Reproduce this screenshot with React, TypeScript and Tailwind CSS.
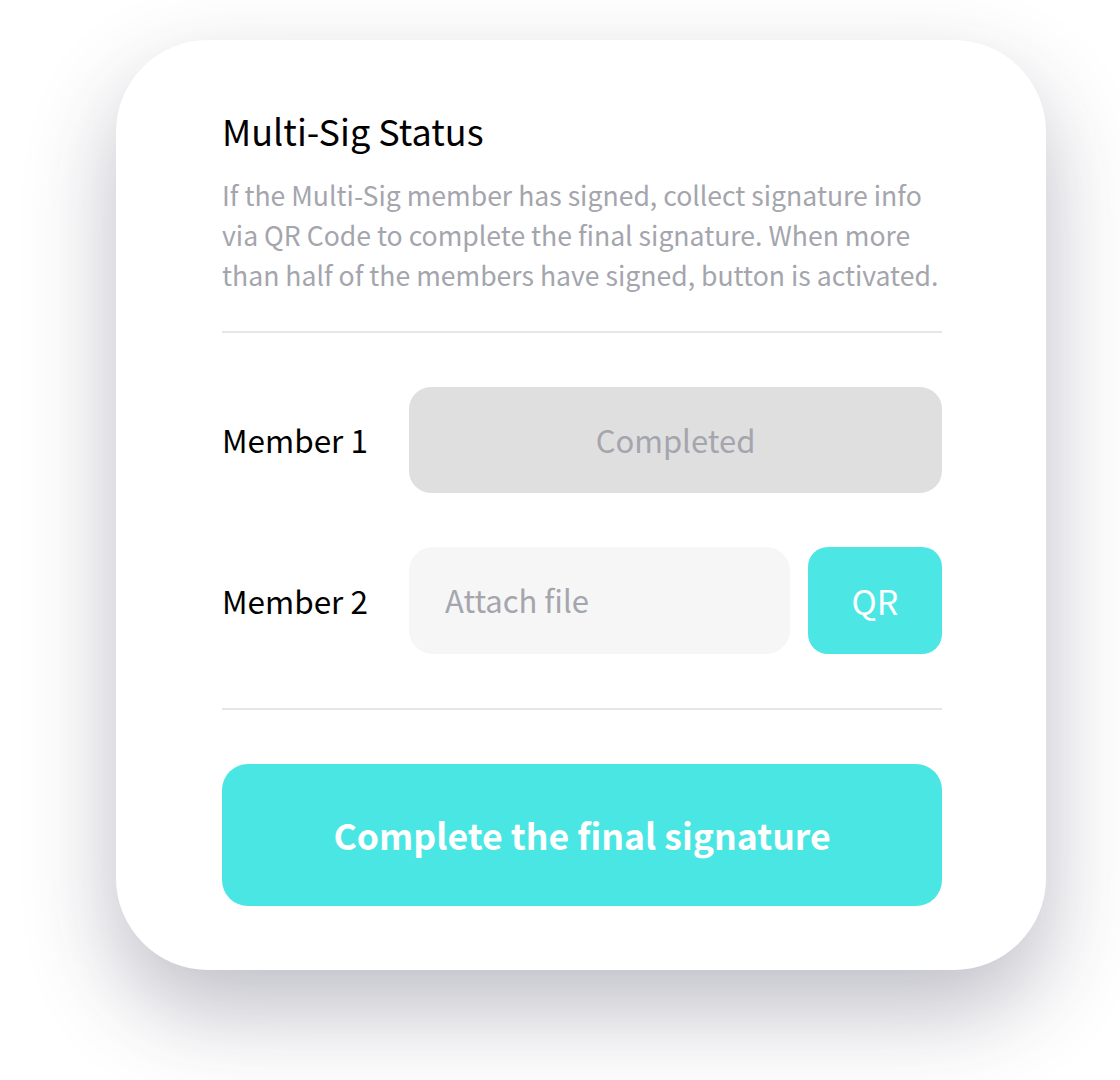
export default function App() {
  return (
    <div className="min-h-[1080px] w-[1120px] bg-white pl-[116px] pt-[40px] font-['Noto_Sans_CJK_SC',sans-serif]">
      <div className="w-[930px] h-[930px] rounded-[92px] bg-white pl-[106px] pr-[104px] pt-[67px] shadow-[0_40px_90px_rgba(40,40,70,0.3)]">
        <h1 className="text-[36px] leading-[46px] text-black">Multi-Sig Status</h1>
        <p className="mt-[22px] text-[26.6px] leading-[40px] text-[#a4a5ad]">
          If the Multi-Sig member has signed, collect signature info via QR Code to complete the final signature. When more
          than half of the members have signed, button is activated.
        </p>
        <div className="mt-[36px] h-[2px] bg-[#e6e6e8]" />

        <div className="mt-[54px] flex items-center">
          <span className="w-[187px] text-[31.5px] text-black">Member 1</span>
          <div className="flex h-[106px] flex-1 items-center justify-center rounded-[22px] bg-[#dfdfe0] text-[31px] text-[#a4a5ad]">
            Completed
          </div>
        </div>

        <div className="mt-[54px] flex items-center">
          <span className="w-[187px] text-[31.5px] text-black">Member 2</span>
          <div className="flex h-[107px] flex-1 items-center rounded-[24px] bg-[#f6f6f6] pl-[36px] text-[31px] text-[#a4a5ad]">
            Attach file
          </div>
          <button className="ml-[18px] flex h-[107px] w-[134px] items-center justify-center rounded-[20px] bg-[#4ce7e5] text-[34px] text-white">
            QR
          </button>
        </div>

        <div className="mt-[54px] h-[2px] bg-[#e6e6e8]" />

        <button className="mt-[54px] flex h-[142px] w-full items-center justify-center rounded-[26px] bg-[#4ae6e4] text-[35.6px] font-bold text-white">
          Complete the final signature
        </button>
      </div>
    </div>
  );
}
